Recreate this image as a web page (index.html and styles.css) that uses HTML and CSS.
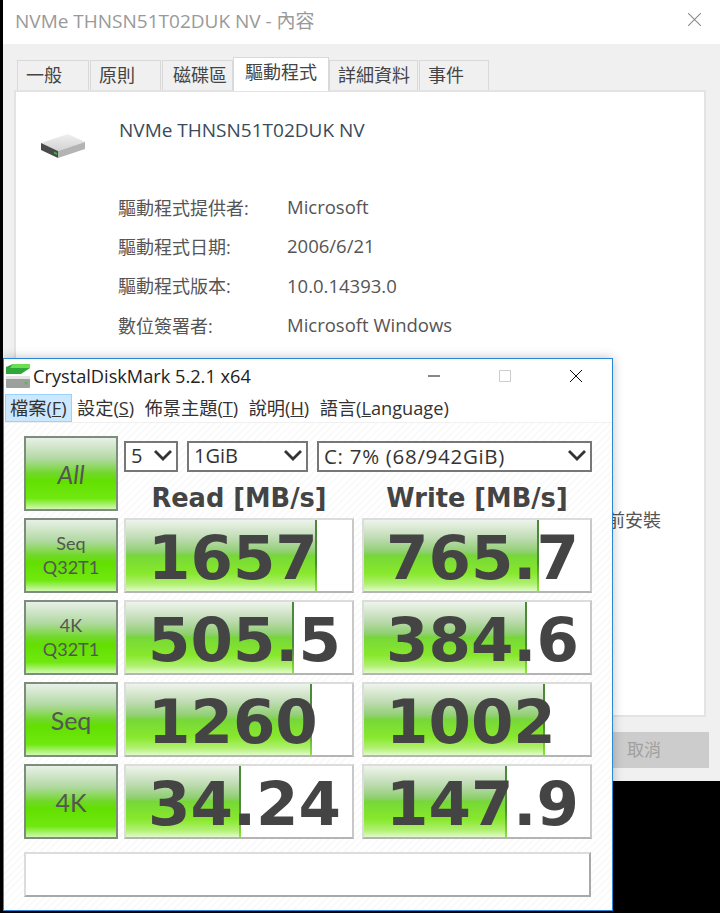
FILE: index.html
```html
<!DOCTYPE html>
<html lang="zh-Hant">
<head>
    <meta charset="UTF-8">
    <meta name="viewport" content="width=device-width, initial-scale=1.0">
    <title>CrystalDiskMark</title>
    <link rel="stylesheet" href="styles.css">
</head>
<body>
    <!-- properties window, behind -->
    <div class="props">
        <div class="props-title">
            <span>NVMe THNSN51T02DUK NV - 內容</span>
            <svg class="props-close" viewBox="0 0 12 12"><path d="M0 0L12 12M12 0L0 12"/></svg>
        </div>
        <div class="props-body">
            <div class="tabs">
                <div class="tab">一般</div>
                <div class="tab">原則</div>
                <div class="tab">磁碟區</div>
                <div class="tab active">驅動程式</div>
                <div class="tab">詳細資料</div>
                <div class="tab">事件</div>
            </div>
            <div class="panel">
                <div class="device">
                    <svg class="device-icon" viewBox="0 0 46 26">
                        <defs>
                            <linearGradient id="driveTop" x1="0" y1="0" x2="0" y2="1">
                                <stop offset="0" stop-color="#efefef"/>
                                <stop offset="1" stop-color="#d2d2d2"/>
                            </linearGradient>
                        </defs>
                        <path d="M1 10L28 1L45 9L18 18Z" fill="url(#driveTop)"/>
                        <path d="M1 10L18 18V25L1 17Z" fill="#4a4a4a"/>
                        <path d="M18 18L45 9V16L18 25Z" fill="#b4b4b4"/>
                        <path d="M14 18.500L17 20V22L14 20.500Z" fill="#39b54a"/>
                    </svg>
                    <div class="device-name">NVMe THNSN51T02DUK NV</div>
                </div>
                <div class="info"><span class="info-label">驅動程式提供者:</span><span>Microsoft</span></div>
                <div class="info"><span class="info-label">驅動程式日期:</span><span>2006/6/21</span></div>
                <div class="info"><span class="info-label">驅動程式版本:</span><span>10.0.14393.0</span></div>
                <div class="info"><span class="info-label">數位簽署者:</span><span>Microsoft Windows</span></div>
                <div class="rollback">前安裝</div>
            </div>
            <div class="props-actions">
                <div class="cancel">取消</div>
            </div>
        </div>
    </div>

    <!-- benchmark window, on top -->
    <div class="cdm">
        <div class="cdm-title">
            <svg class="cdm-icon" viewBox="0 0 26 26">
                <path d="M1 4L8 1H25V5L16 11H1Z" fill="#2fa83a"/>
                <path d="M8 1H25V5H5Z" fill="#6be04f"/>
                <rect x="1" y="13" width="24" height="12" rx="1" fill="#9da19d"/>
                <rect x="1" y="13" width="24" height="3" fill="#e2e5e2"/>
                <circle cx="21" cy="20" r="1.500" fill="#5b5"/>
            </svg>
            <span class="cdm-name">CrystalDiskMark 5.2.1 x64</span>
            <div class="win-btns">
                <svg class="win-min" viewBox="0 0 12 12"><path d="M0 6H12"/></svg>
                <svg class="win-max" viewBox="0 0 12 12"><path d="M.5 .5H11.500V11.500H.5Z"/></svg>
                <svg class="win-close" viewBox="0 0 12 12"><path d="M0 0L12 12M12 0L0 12"/></svg>
            </div>
        </div>
        <div class="menu">
            <div class="menu-item hover">檔案(<u>F</u>)</div>
            <div class="menu-item">設定(<u>S</u>)</div>
            <div class="menu-item">佈景主題(<u>T</u>)</div>
            <div class="menu-item">說明(<u>H</u>)</div>
            <div class="menu-item">語言(<u>L</u>anguage)</div>
        </div>
        <div class="board">
            <div class="test-btn all-btn">All</div>
            <div class="top-col">
                <div class="selects">
                    <div class="select sel-count">5<svg class="chev" viewBox="0 0 18 11"><path d="M1 1L9 9L17 1"/></svg></div>
                    <div class="select sel-size">1GiB<svg class="chev" viewBox="0 0 18 11"><path d="M1 1L9 9L17 1"/></svg></div>
                    <div class="select sel-drive">C: 7% (68/942GiB)<svg class="chev" viewBox="0 0 18 11"><path d="M1 1L9 9L17 1"/></svg></div>
                </div>
                <div class="heads">
                    <div class="head">Read [MB/s]</div>
                    <div class="head">Write [MB/s]</div>
                </div>
            </div>

            <div class="test-btn">Seq<br>Q32T1</div>
            <div class="meter"><div class="fill" style="width: 84.500%"></div><span class="val">1657</span></div>
            <div class="meter"><div class="fill" style="width: 77.400%"></div><span class="val">765.7</span></div>

            <div class="test-btn">4K<br>Q32T1</div>
            <div class="meter"><div class="fill" style="width: 74.300%"></div><span class="val">505.5</span></div>
            <div class="meter"><div class="fill" style="width: 72%"></div><span class="val">384.6</span></div>

            <div class="test-btn big">Seq</div>
            <div class="meter"><div class="fill" style="width: 82.300%"></div><span class="val">1260</span></div>
            <div class="meter"><div class="fill" style="width: 80%"></div><span class="val">1002</span></div>

            <div class="test-btn big">4K</div>
            <div class="meter"><div class="fill" style="width: 50.900%"></div><span class="val">34.24</span></div>
            <div class="meter"><div class="fill" style="width: 63.300%"></div><span class="val">147.9</span></div>

            <div class="comment"></div>
        </div>
    </div>
</body>
</html>
```

FILE: styles.css
```css
* {
    box-sizing: border-box;
}

body {
    margin: 0;
    width: 720px;
    height: 913px;
    background: #000;
    font-family: "Open Sans", "Noto Sans CJK TC", sans-serif;
    overflow: hidden;
    position: relative;
}

/* Properties window */
.props {
    margin-left: 3px;
    height: 781px;
    display: flex;
    flex-direction: column;
    background: #f0f0f0;
}

.props-title {
    height: 44px;
    flex: none;
    padding: 0 19px 5px 12px;
    display: flex;
    align-items: center;
    justify-content: space-between;
    background: #fff;
    color: #999;
    font-size: 19px;
}

.props-close {
    width: 13px;
    height: 13px;
    stroke: #8a8a8a;
    stroke-width: 1;
    fill: none;
}

.props-body {
    flex: 1;
    padding: 13px 14px 0 11px;
}

.tabs {
    display: flex;
    height: 33px;
    padding-left: 3px;
    align-items: flex-end;
}

.tab {
    height: 30px;
    background: #f0f0f0;
    border: 1px solid #d9d9d9;
    border-bottom: none;
    margin-right: 1px;
    padding: 0 7px 0 8px;
    color: #444;
    font-size: 18px;
    line-height: 28px;
    white-space: nowrap;
    min-width: 70px;
}

.tab:nth-child(1) {
    min-width: 72px;
}

.tab:nth-child(2) {
    min-width: 71px;
}

.tab:nth-child(3) {
    padding: 0 5px 0 10px;
}

.tab.active {
    height: 34px;
    margin: 0 0 -1px -1px;
    padding: 0 11px;
    background: #fff;
    position: relative;
    z-index: 1;
}

.panel {
    height: 627px;
    background: #fff;
    border: 2px solid #e3e3e3;
    padding: 20px 0 0 102px;
    color: #555;
    font-size: 18.500px;
}

.device {
    display: flex;
    height: 75px;
    margin-left: -80px;
}

.device-icon {
    width: 46px;
    height: 26px;
    margin: 21px 33px 0 2px;
}

.device-name {
    color: #3a4a5a;
    font-size: 19px;
    line-height: 24px;
    padding-top: 6px;
}

.info {
    display: flex;
    height: 39.300px;
    align-items: center;
}

.info-label {
    width: 169px;
    font-size: 18px;
}

.rollback {
    margin: 164px 0 0 489px;
    font-size: 18px;
    line-height: 24px;
}

.props-actions {
    display: flex;
    justify-content: flex-end;
    margin: 15px -3px 0 0;
}

.cancel {
    width: 96px;
    height: 36px;
    padding-left: 14px;
    background: #ccc;
    color: #a0a0a0;
    font-size: 17px;
    line-height: 36px;
}

/* CrystalDiskMark window */
.cdm {
    position: absolute;
    left: 3px;
    top: 358px;
    width: 610px;
    height: 553px;
    display: flex;
    flex-direction: column;
    background: #fff;
    border: 1px solid #2b88d8;
    box-shadow: 0 0 10px rgba(0, 0, 0, 0.25);
}

.cdm-title {
    height: 35px;
    flex: none;
    display: flex;
    align-items: center;
    padding: 0 0 1px 1px;
    color: #222;
    font-size: 18.200px;
}

.cdm-icon {
    width: 26px;
    height: 26px;
}

.cdm-name {
    margin-left: 2px;
    flex: 1;
}

.win-btns {
    display: flex;
    align-items: center;
    gap: 59px;
    padding-right: 30px;
}

.win-btns svg {
    width: 12px;
    height: 12px;
    fill: none;
    stroke-width: 1;
}

.win-min, .win-close {
    stroke: #111;
}

.win-max {
    stroke: #ccc;
}

.menu {
    height: 29px;
    flex: none;
    display: flex;
    padding-left: 1px;
    border-bottom: 1px solid #f0f0f0;
    color: #333;
    font-size: 18.200px;
}

.menu-item {
    padding: 0 4.500px 0 4px;
    line-height: 26px;
    white-space: nowrap;
    border: 1px solid transparent;
}

.menu-item.hover {
    background: #cce8ff;
    border-color: #99d1ff;
}

.board {
    flex: 1;
    padding: 13px 20px 13px 20px;
    display: grid;
    grid-template-columns: 92px 230px 230px;
    grid-template-rows: 75px 75px 75px 75px 75px 51px;
    column-gap: 8px;
    row-gap: 7px;
    align-content: start;
    background: repeating-linear-gradient(135deg, #fff 0, #fff 3px, #fafafa 3px, #fafafa 5px);
}

.test-btn {
    margin-right: -2px;
    padding-bottom: 2px;
    display: flex;
    align-items: center;
    justify-content: center;
    text-align: center;
    border: 2px solid #7d8c7d;
    background: linear-gradient(#e8f0e8 0%, #b0d8a0 30%, #70d828 50%, #62e000 60%, #70e810 85%, #d0f8b0 100%);
    color: #555;
    font-family: "Lato", sans-serif;
    font-size: 18px;
    line-height: 24px;
}

.test-btn.big {
    padding-bottom: 0;
    font-size: 25px;
}

.all-btn {
    padding-bottom: 0;
    font-size: 25px;
    font-style: italic;
}

.top-col {
    grid-column: 2 / 4;
}

.selects {
    display: flex;
    gap: 9px;
    margin-top: 5px;
}

.select {
    height: 31px;
    display: flex;
    align-items: center;
    justify-content: space-between;
    padding: 0 4px 2px 5px;
    border: 2px solid #777;
    background: #fff;
    color: #333;
    font-size: 20px;
}

.sel-count {
    width: 54px;
}

.sel-size {
    width: 121px;
}

.sel-drive {
    width: 275px;
    font-size: 20.500px;
    letter-spacing: 0.700px;
}

.chev {
    width: 18px;
    height: 11px;
    fill: none;
    stroke: #333;
    stroke-width: 2.800;
}

.heads {
    display: flex;
    gap: 8px;
    margin-top: 9px;
}

.head {
    width: 230px;
    height: 34px;
    text-align: center;
    color: #444;
    font-family: "DejaVu Sans", sans-serif;
    font-weight: bold;
    font-size: 25.700px;
    line-height: 34px;
    white-space: nowrap;
}

.meter {
    position: relative;
    background: #fff;
    border: 2px solid #dcdcdc;
    border-bottom-color: #b4b4b4;
    border-right-color: #c8c8c8;
    overflow: hidden;
}

.fill {
    position: absolute;
    top: 0;
    bottom: 0;
    left: 0;
    border-right: 2px solid;
    border-image: linear-gradient(#4c8a3a 60%, #8ee83a) 1;
    background: linear-gradient(#eef4ec 0%, #c0dcb4 25%, #8fcf70 45%, #76d838 50%, #88e82c 75%, #b0f070 90%, #e0fbc8 100%);
}

.val {
    position: relative;
    display: block;
    padding-left: 22px;
    color: #444;
    font-family: "DejaVu Sans", sans-serif;
    font-weight: bold;
    font-size: 61px;
    line-height: 75px;
    white-space: nowrap;
}

.comment {
    grid-column: 1 / 4;
    height: 45px;
    margin: 6px 1px 0 0;
    background: #fff;
    border: 2px solid #dcdcdc;
    border-bottom-color: #a8a8a8;
    border-right-color: #a8a8a8;
}
```
